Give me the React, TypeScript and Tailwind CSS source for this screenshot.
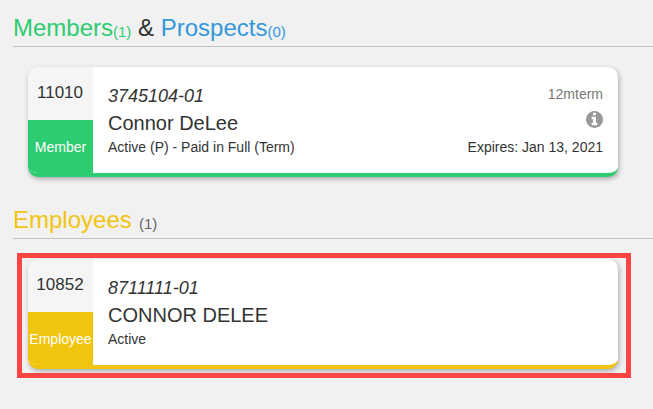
function InfoIcon() {
	return (
		<svg viewBox="128 128 1536 1536" className="mt-[8px] h-[17px] w-[17px] fill-[#999]">
			<path d="M1152 1376v-160q0-14-9-23t-23-9h-96v-512q0-14-9-23t-23-9h-320q-14 0-23 9t-9 23v160q0 14 9 23t23 9h96v320h-96q-14 0-23 9t-9 23v160q0 14 9 23t23 9h448q14 0 23-9t9-23zm-128-896v-160q0-14-9-23t-23-9h-192q-14 0-23 9t-9 23v160q0 14 9 23t23 9h192q14 0 23-9t9-23zm640 416q0 209-103 385.5t-279.5 279.5-385.5 103-385.5-103-279.5-279.5-103-385.5 103-385.5 279.5-279.5 385.5-103 385.5 103 279.5 279.5 103 385.5z" />
		</svg>
	);
}

function PersonCard({
	id,
	kind,
	number,
	name,
	status,
	accent,
	term,
	expires,
}: {
	id: string;
	kind: string;
	number: string;
	name: string;
	status: string;
	accent: "green" | "yellow";
	term?: string;
	expires?: string;
}) {
	const isGreen = accent === "green";
	return (
		<div
			className={`flex h-[110px] w-[590px] overflow-hidden rounded-[10px] border-b-4 bg-white shadow-[1px_2px_5px_rgba(0,0,0,0.3)] ${isGreen ? "border-[#2ecc71]" : "border-[#f1c40f]"}`}
		>
			<div className="flex w-[65px] shrink-0 flex-col">
				<div className="flex h-[53px] items-start justify-center bg-[#f5f5f5] pt-[14px] pr-[1px] text-[17px] leading-[24px] text-[#333]">{id}</div>
				<div className={`flex flex-1 items-center justify-center pt-[2px] text-[14px] whitespace-nowrap text-white ${isGreen ? "bg-[#2ecc71]" : "bg-[#f1c40f]"}`}>{kind}</div>
			</div>
			<div className="flex flex-1 justify-between pt-[19px] pr-[15px] pl-[15px]">
				<div className="flex flex-col">
					<div className="text-[18px] leading-[20px] text-[#333] italic">{number}</div>
					<div className="mt-[5px] text-[20px] leading-[24px] text-[#333]">{name}</div>
					<div className="mt-[2px] text-[14px] leading-[20px] text-[#333]">{status}</div>
				</div>
				{term ? (
					<div className="flex flex-col items-end">
						<div className="mt-[-1px] text-[14px] leading-[18px] text-[#777]">{term}</div>
						<InfoIcon />
						<div className="mt-[9px] text-[14px] leading-[20px] text-[#333]">{expires}</div>
					</div>
				) : null}
			</div>
		</div>
	);
}

export default function App() {
	return (
		<div className="h-[409px] overflow-hidden bg-[#f1f1f1] pl-[13px] font-['Liberation_Sans',Arial,sans-serif]">
			<div className="flex h-[47px] items-end border-b border-[#c4c4c4] pb-[1px] text-[24px] leading-[34px] whitespace-pre">
				<span className="text-[#2ecc71]">Members</span>
				<span className="self-end pb-[1px] text-[15px] leading-[24px] text-[#2ecc71]">(1)</span>
				<span className="text-[#333]"> &amp; </span>
				<span className="text-[#3498db]">Prospects</span>
				<span className="self-end pb-[1px] text-[15px] leading-[24px] text-[#3498db]">(0)</span>
			</div>
			<div className="mt-[20px] ml-[15px]">
				<PersonCard id="11010" kind="Member" number="3745104-01" name="Connor DeLee" status="Active (P) - Paid in Full (Term)" accent="green" term="12mterm" expires="Expires: Jan 13, 2021" />
			</div>
			<div className="mt-[25px] flex h-[37px] items-end border-b border-[#c4c4c4] pb-[1px] text-[24px] leading-[34px] whitespace-pre">
				<span className="text-[#f1c40f]">Employees</span>
				<span className="ml-[3px] self-end pb-[1px] text-[15px] leading-[24px] text-[#666]"> (1)</span>
			</div>
			<div className="mt-[14px] ml-[4px] w-[614px] border-[5px] border-[#ff4444] pt-[1px] pr-[8px] pb-[4px] pl-[6px]">
				<PersonCard id="10852" kind="Employee" number="8711111-01" name="CONNOR DELEE" status="Active" accent="yellow" />
			</div>
		</div>
	);
}
